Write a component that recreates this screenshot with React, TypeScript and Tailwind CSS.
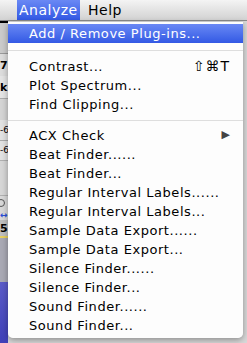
import React from 'react';

type Item =
  | { kind: 'sep'; h: string }
  | { kind: 'item'; label: string; shortcut?: string; submenu?: boolean; active?: boolean };

const items: Item[] = [
  { kind: 'item', label: 'Add / Remove Plug-ins...', active: true },
  { kind: 'sep', h: 'h-[14px]' },
  { kind: 'item', label: 'Contrast...', shortcut: '⇧⌘T' },
  { kind: 'item', label: 'Plot Spectrum...' },
  { kind: 'item', label: 'Find Clipping...' },
  { kind: 'sep', h: 'h-[12px]' },
  { kind: 'item', label: 'ACX Check', submenu: true },
  { kind: 'item', label: 'Beat Finder......' },
  { kind: 'item', label: 'Beat Finder...' },
  { kind: 'item', label: 'Regular Interval Labels......' },
  { kind: 'item', label: 'Regular Interval Labels...' },
  { kind: 'item', label: 'Sample Data Export......' },
  { kind: 'item', label: 'Sample Data Export...' },
  { kind: 'item', label: 'Silence Finder......' },
  { kind: 'item', label: 'Silence Finder...' },
  { kind: 'item', label: 'Sound Finder......' },
  { kind: 'item', label: 'Sound Finder...' },
];

function MenuRow({ item }: { item: Item }) {
  if (item.kind === 'sep') {
    return (
      <div className={`${item.h} flex items-center`}>
        <div className="h-px w-full bg-[#dedede]" />
      </div>
    );
  }
  return (
    <div
      className={`h-[19px] flex items-center pl-[21px] pr-[13px] ${
        item.active ? 'bg-gradient-to-b from-[#6a88f4] to-[#3358e4] text-white' : 'text-black'
      }`}
    >
      <span className="flex-1 whitespace-nowrap tracking-[0.55px]">{item.label}</span>
      {item.shortcut && <span className="text-[14px] tracking-[1px]">{item.shortcut}</span>}
      {item.submenu && <span className="text-[11px] text-[#444]">▶</span>}
    </div>
  );
}

function LeftStrip() {
  // the bit of Audacity window peeking out from behind the menu
  return (
    <div className="w-[8px] flex flex-col text-[11px] leading-none font-bold text-black overflow-hidden">
      <div className="h-[2px] bg-black" />
      <div className="h-[31px] bg-[#cacaca] border-b border-[#9a9a9a]" />
      <div className="h-[22px] bg-[#dcdcdc] flex items-center">7</div>
      <div className="h-[22px] bg-[#e4e4e4] flex items-center">k</div>
      <div className="h-[22px] bg-[#d4d4d4] border-t border-[#aaa]" />
      <div className="h-[20px] bg-[#e2e2e2] text-[9px] font-normal flex items-center">-6</div>
      <div className="h-[20px] bg-[#e2e2e2] text-[9px] font-normal flex items-center border-t border-[#aaa]">-6</div>
      <div className="h-[36px] bg-[#d6d6d6] border-y border-[#b0b0b0]" />
      <div className="h-[14px] bg-[#d8d8d8] flex items-center">
        <div className="w-[8px] h-[8px] rounded-full border border-[#555] -ml-[3px]" />
      </div>
      <div className="h-[10px] bg-[#d8d8d8] text-[#2b4fd6] text-[9px] flex items-center">↔</div>
      <div className="h-[16px] bg-[#bfbfbf] flex items-center">5</div>
      <div className="h-[2px] bg-[#e8d060]" />
      <div className="h-[44px] bg-[#a9a9b4]" />
      <div className="flex-1 bg-gradient-to-b from-[#5b5bc8] to-[#4040b8]" />
    </div>
  );
}

export default function App() {
  return (
    <div
      className="relative w-[247px] h-[343px] overflow-hidden bg-[#cfcfcf] flex flex-col"
      style={{ fontFamily: '"DejaVu Sans", "Liberation Sans", sans-serif' }}
    >
      <div className="h-[21px] flex items-center bg-gradient-to-b from-[#f4f4f4] to-[#d2d2d2] border-b border-[#8a8a8a] text-[14px] text-black tracking-[0.5px]">
        <div className="w-[17px]" />
        <div className="h-full px-[2px] w-[63px] flex items-center bg-gradient-to-b from-[#6a88f4] to-[#3358e4] text-white">
          Analyze
        </div>
        <div className="ml-[8px]">Help</div>
      </div>
      <div className="flex-1 flex">
        <LeftStrip />
        <div className="flex-1 bg-[#d8d8d8]" />
      </div>

      <div className="absolute left-[8px] top-[22px] w-[235px] h-[316px] bg-white/95 rounded-b-[5px] shadow-[0_2px_6px_rgba(0,0,0,0.35)] pt-[2px] text-[13px]">
        {items.map((it, i) => (
          <MenuRow key={i} item={it} />
        ))}
      </div>
    </div>
  );
}
